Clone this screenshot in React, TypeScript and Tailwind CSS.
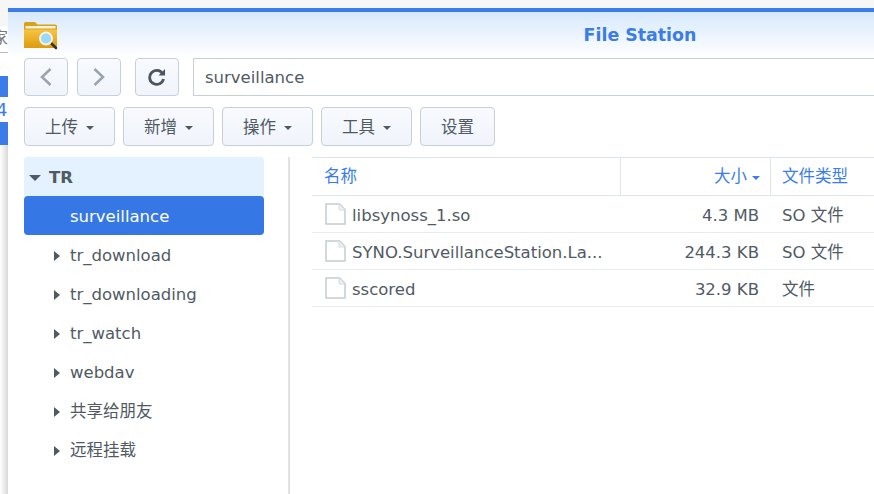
import { ReactNode } from 'react';

const FONT = 'font-["DejaVu_Sans","Noto_Sans_CJK_SC",sans-serif]';

const TREE = ['tr_download', 'tr_downloading', 'tr_watch', 'webdav', '共享给朋友', '远程挂载'];

const FILES = [
  { name: 'libsynoss_1.so', size: '4.3 MB', type: 'SO 文件' },
  { name: 'SYNO.SurveillanceStation.La...', size: '244.3 KB', type: 'SO 文件' },
  { name: 'sscored', size: '32.9 KB', type: '文件' },
];

const FolderIcon = () => (
  <svg width="34" height="29" viewBox="0 0 34 29">
    <defs>
      <linearGradient id="fold" x1="0" y1="0" x2="0" y2="1">
        <stop offset="0" stopColor="#f6c445" />
        <stop offset="1" stopColor="#dd9c0c" />
      </linearGradient>
    </defs>
    <path d="M0 2.500Q0 1 1.500 1H11l2.500 2.500H31Q33 3.500 33 5V26Q33 27 32 27H1Q0 27 0 26Z" fill="#d9a019" />
    <rect x="1.500" y="5" width="30" height="2.500" fill="#fbf3dc" />
    <path d="M0 8.500H33V26Q33 27 32 27H1Q0 27 0 26Z" fill="url(#fold)" />
    <path d="M26 21L32 27" stroke="#333" strokeWidth="2.500" strokeLinecap="round" />
    <circle cx="22" cy="17.500" r="6" fill="#9bd9fb" stroke="#f4f2e4" strokeWidth="2" />
  </svg>
);

const FileIcon = () => (
  <svg width="21" height="22" viewBox="0 0 21 22" className="shrink-0">
    <path d="M1 1H14.500L20 6.500V21H1Z" fill="#fff" stroke="#c2ccd3" strokeWidth="1.500" />
    <path d="M14 1V7H20" fill="#eef1f4" stroke="#d5dce1" strokeWidth="1" />
  </svg>
);

const Caret = () => (
  <span className="mt-0.5 ml-2 h-0 w-0 border-x-[4.500px] border-t-[4.500px] border-x-transparent border-t-[#505a64]" />
);

const NavButton = ({ children }: { children: ReactNode }) => (
  <button className="flex h-[38px] w-11 items-center justify-center rounded-[4px] border border-[#c6cfdc] bg-gradient-to-b from-[#f8fafe] to-[#f0f4fb]">
    {children}
  </button>
);

const ToolButton = ({ label, menu = true }: { label: string; menu?: boolean }) => (
  <button className={`flex h-[39px] items-center justify-center rounded-[4px] border border-[#c6cfdc] bg-gradient-to-b from-[#f8fafe] to-[#f0f4fb] text-[16.500px] text-[#505a64] ${menu ? 'w-[91px]' : 'w-[75px]'}`}>
    <span className="pt-1">{label}</span>
    {menu && <Caret />}
  </button>
);

// what shows of the page behind the window
const LeftStrip = () => (
  <div className="flex w-2 shrink-0 flex-col overflow-hidden bg-white text-[16px] leading-none text-[#3a7de8]">
    <div className="h-[26px] bg-[#f6f6f6]" />
    <div className="h-[27px] border-b border-[#bbbbbb] text-[#777]">
      <span className="-ml-2 block pt-1">家</span>
    </div>
    <div className="h-[23px]" />
    <div className="h-[21px] bg-[#3a7de8]" />
    <div className="flex h-[25px] items-center overflow-hidden text-[18px]">
      <span className="-ml-1">4</span>
    </div>
    <div className="h-[23px] bg-[#3a7de8]" />
    <div className="flex-1 bg-gradient-to-r from-white to-[#d9d9d9]" />
  </div>
);

export default function App() {
  return (
    <div className={`${FONT} flex h-[494px] w-[874px] overflow-hidden bg-[#f6f6f6]`}>
      <LeftStrip />
      <div className="flex min-w-0 flex-1 flex-col pt-2">
        <div className="flex h-[486px] w-[1264px] flex-col border-t-4 border-[#3a7de8] bg-white">
          {/* title bar */}
          <div className="flex h-[46px] shrink-0 items-center bg-gradient-to-b from-[#d7e8fb] to-white pl-4">
            <FolderIcon />
            <div className="flex-1 pr-[50px] text-center text-[17.400px] font-bold text-[#3a7de8]">File Station</div>
          </div>

          {/* address row */}
          <div className="flex shrink-0 items-center pl-4">
            <div className="flex gap-[9px]">
              <NavButton>
                <svg width="14" height="20" viewBox="0 0 14 20" fill="none" stroke="#9aa3ad" strokeWidth="2.500">
                  <path d="M11.500 2L3 10L11.500 18" />
                </svg>
              </NavButton>
              <NavButton>
                <svg width="14" height="20" viewBox="0 0 14 20" fill="none" stroke="#9aa3ad" strokeWidth="2.500">
                  <path d="M2.500 2L11 10L2.500 18" />
                </svg>
              </NavButton>
            </div>
            <div className="ml-[14px]">
              <NavButton>
                <svg width="18" height="18" viewBox="0 0 18 18" fill="none">
                  <path d="M14.500 5.500A7 7 0 1 0 15.500 11" stroke="#4c5560" strokeWidth="2.800" />
                  <path d="M10.500 7.500H17V1Z" fill="#4c5560" />
                </svg>
              </NavButton>
            </div>
            <div className="ml-[14px] flex h-[38px] flex-1 items-center border border-[#c6cfdc] bg-white pt-0.5 pl-[11px] text-[16.500px] text-[#505a64]">
              surveillance
            </div>
          </div>

          {/* toolbar */}
          <div className="mt-[11px] flex shrink-0 gap-2 pl-4">
            <ToolButton label="上传" />
            <ToolButton label="新增" />
            <ToolButton label="操作" />
            <ToolButton label="工具" />
            <ToolButton label="设置" menu={false} />
          </div>

          {/* body */}
          <div className="mt-[11px] flex min-h-0 flex-1">
            <div className="flex w-[282px] shrink-0 border-r-[2px] border-[#e2e2e2] pl-4">
              <div className="w-60 text-[16.500px] text-[#505a64]">
                <div className="flex h-[39px] items-center rounded-t-[4px] bg-[#e3f2fe] pl-[5px] font-bold">
                  <span className="mt-0.5 h-0 w-0 border-x-[6px] border-t-[6px] border-x-transparent border-t-[#505a64]" />
                  <span className="ml-2 pt-1">TR</span>
                </div>
                <div className="flex h-[39px] items-center rounded-[4px] bg-[#3578e5] pt-1 pl-[46px] text-white">surveillance</div>
                {TREE.map((item) => (
                  <div key={item} className="flex h-[39px] items-center pl-[30px]">
                    <span className="mt-0.5 h-0 w-0 border-y-[5.500px] border-l-[6px] border-y-transparent border-l-[#505a64]" />
                    <span className="ml-2.5 pt-1">{item}</span>
                  </div>
                ))}
              </div>
            </div>

            <div className="ml-[22px] min-w-0 flex-1 text-[16.500px] text-[#505a64]">
              <div className="flex h-[39px] items-stretch border-y border-[#dfe5ec] text-[#3a7de8]">
                <div className="flex w-[308px] items-center pt-0.5 pl-3">名称</div>
                <div className="flex w-[150px] items-center justify-end border-l border-[#dfe5ec] pt-0.5 pr-[10px]">
                  大小
                  <span className="ml-[5px] h-0 w-0 border-x-[4.500px] border-t-[4.500px] border-x-transparent border-t-[#3a7de8]" />
                </div>
                <div className="flex flex-1 items-center border-l border-[#dfe5ec] pt-0.5 pl-[11px]">文件类型</div>
              </div>
              {FILES.map((f) => (
                <div key={f.name} className="flex h-[37px] items-center border-b border-[#e8ecf0]">
                  <div className="flex w-[308px] items-center gap-[6px] overflow-hidden whitespace-nowrap pl-[13px]">
                    <FileIcon />
                    <span className="pt-1">{f.name}</span>
                  </div>
                  <div className="w-[139px] pt-1 text-right">{f.size}</div>
                  <div className="ml-[23px] pt-1">{f.type}</div>
                </div>
              ))}
            </div>
          </div>
        </div>
      </div>
    </div>
  );
}
